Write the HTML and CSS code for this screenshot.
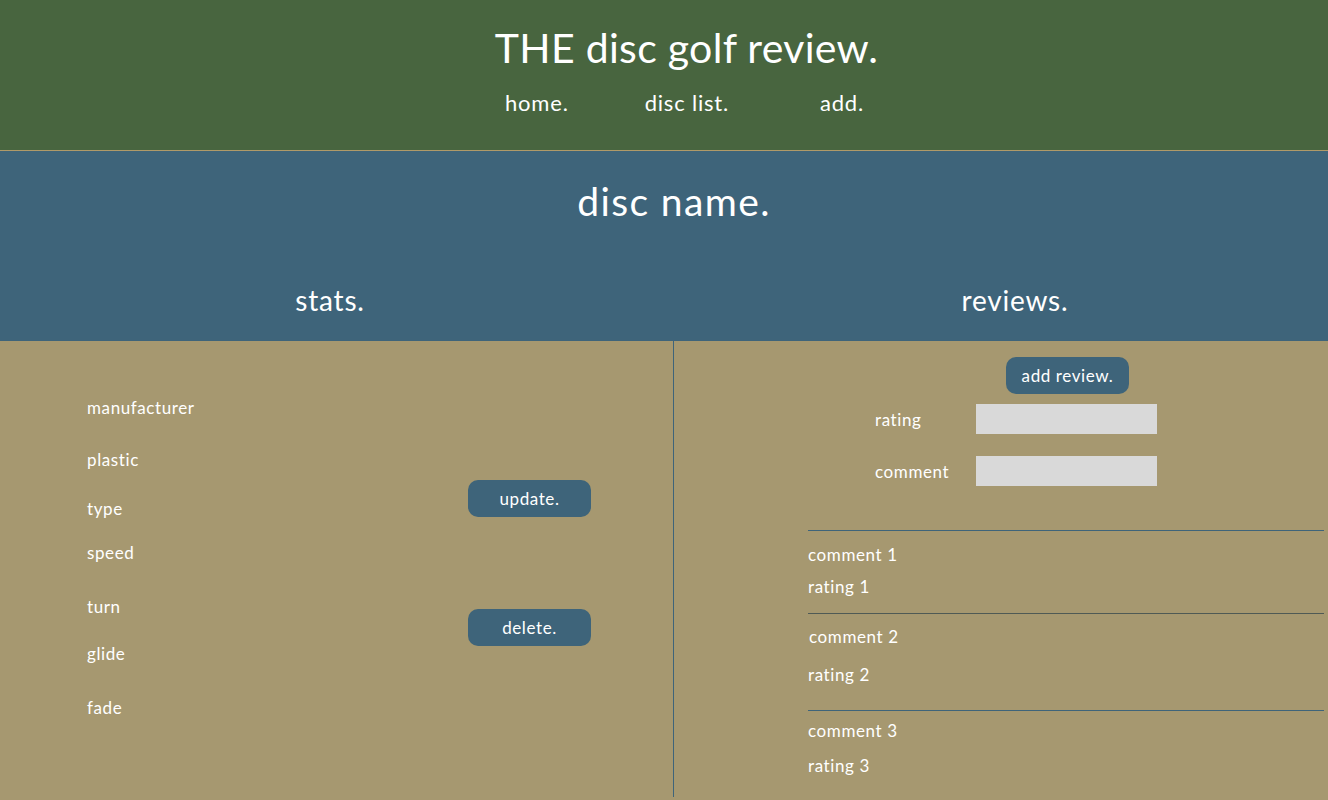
FILE: index.html
```html
<!DOCTYPE html>
<html lang="en">
<head>
<meta charset="utf-8">
<title>THE disc golf review.</title>
<link rel="stylesheet" href="styles.css">
</head>
<body>
<header class="site-header">
  <h1 class="site-title">THE disc golf review.</h1>
  <nav class="site-nav">
    <a class="nav-link nav-home" href="#">home.</a>
    <a class="nav-link nav-list" href="#">disc list.</a>
    <a class="nav-link nav-add" href="#">add.</a>
  </nav>
</header>
<section class="disc-head">
  <h2 class="disc-name">disc name.</h2>
  <div class="col-heads">
    <h3 class="col-head col-head-stats">stats.</h3>
    <h3 class="col-head col-head-reviews">reviews.</h3>
  </div>
</section>
<main class="disc-body">
  <div class="stats">
    <ul class="stat-list">
      <li class="stat s1">manufacturer</li>
      <li class="stat s2">plastic</li>
      <li class="stat s3">type</li>
      <li class="stat s4">speed</li>
      <li class="stat s5">turn</li>
      <li class="stat s6">glide</li>
      <li class="stat s7">fade</li>
    </ul>
    <div class="stat-actions">
      <button class="btn btn-update">update.</button>
      <button class="btn btn-delete">delete.</button>
    </div>
  </div>
  <div class="divider"></div>
  <div class="reviews">
    <button class="btn btn-add">add review.</button>
    <form class="review-form">
      <label class="form-row row-rating"><span class="form-label">rating</span><input class="form-input" type="text"></label>
      <label class="form-row row-comment"><span class="form-label">comment</span><input class="form-input" type="text"></label>
    </form>
    <div class="review r1">
      <p class="review-comment">comment 1</p>
      <p class="review-rating">rating 1</p>
    </div>
    <div class="review r2">
      <p class="review-comment c2">comment 2</p>
      <p class="review-rating">rating 2</p>
    </div>
    <div class="review r3">
      <p class="review-comment">comment 3</p>
      <p class="review-rating">rating 3</p>
    </div>
  </div>
</main>
</body>
</html>
```

FILE: styles.css
```css
* { box-sizing: border-box; }
html, body { margin: 0; padding: 0; }
body {
  width: 1328px;
  height: 800px;
  overflow: hidden;
  font-family: Lato, "Noto Sans", sans-serif;
  color: #ffffff;
  background: #a69870;
}

.site-header {
  height: 151px;
  background: #48653f;
  border-bottom: 1px solid #b09a68;
  padding-top: 25px;
}
.site-title {
  margin: 0 0 0 45px;
  text-align: center;
  font-weight: 400;
  font-size: 41px;
  line-height: 46px;
  letter-spacing: 0.3px;
}
.site-nav {
  display: flex;
  margin-top: 18px;
  padding-left: 505px;
  font-size: 22px;
  line-height: 28px;
  letter-spacing: 0.8px;
}
.nav-link { color: #ffffff; text-decoration: none; }
.nav-list { margin-left: 76px; }
.nav-add { margin-left: 91px; }

.disc-head {
  height: 190px;
  background: #3e647a;
  padding-top: 27px;
}
.disc-name {
  margin: 0 0 0 20px;
  text-align: center;
  font-weight: 400;
  font-size: 39px;
  line-height: 46px;
  letter-spacing: 1.4px;
}
.col-heads {
  display: flex;
  margin-top: 60px;
}
.col-head {
  margin: 0;
  font-weight: 400;
  font-size: 28px;
  line-height: 32px;
  letter-spacing: 0.8px;
  text-align: center;
}
.col-head-stats { width: 660px; }
.col-head-reviews { flex: 1; padding-left: 42px; }

.disc-body {
  display: flex;
  height: 459px;
}
.stats {
  width: 673px;
  display: flex;
  padding-left: 87px;
}
.stat-list {
  list-style: none;
  margin: 0;
  padding: 57px 0 0;
  width: 381px;
  font-size: 17px;
  line-height: 20px;
  letter-spacing: 0.6px;
}
.s2 { margin-top: 32px; }
.s3 { margin-top: 29px; }
.s4 { margin-top: 24px; }
.s5 { margin-top: 34px; }
.s6 { margin-top: 27px; }
.s7 { margin-top: 34px; }

.stat-actions {
  display: flex;
  flex-direction: column;
  padding-top: 139px;
  gap: 92px;
}
.btn {
  width: 123px;
  height: 37px;
  border: none;
  border-radius: 10px;
  background: #3e647a;
  color: #ffffff;
  font-family: Lato, "Noto Sans", sans-serif;
  font-size: 17px;
  letter-spacing: 0.6px;
  padding: 0;
}

.divider {
  width: 1px;
  height: 456px;
  background: #3e647a;
}

.reviews {
  flex: 1;
  padding: 16px 4px 0 134px;
}
.btn-add { margin-left: 198px; display: block; }
.review-form { padding-left: 67px; margin-top: 10px; }
.form-row { display: flex; align-items: center; }
.row-comment { margin-top: 22px; }
.form-label { width: 101px; font-size: 17px; letter-spacing: 0.6px; }
.form-input {
  width: 181px;
  height: 30px;
  border: none;
  background: #d9d9d9;
  padding: 0;
}

.review {
  border-top: 1px solid #3e647a;
  font-size: 17px;
  line-height: 20px;
  letter-spacing: 0.6px;
}
.review p { margin: 0; }
.r1 { margin-top: 44px; padding-top: 14px; height: 83px; }
.r1 .review-rating { margin-top: 12px; }
.r2 { padding-top: 13px; height: 97px; border-top-color: #4f5a55; }
.r2 .review-rating { margin-top: 18px; }
.c2 { padding-left: 1px; }
.r3 { padding-top: 10px; }
.r3 .review-rating { margin-top: 15px; }
```
